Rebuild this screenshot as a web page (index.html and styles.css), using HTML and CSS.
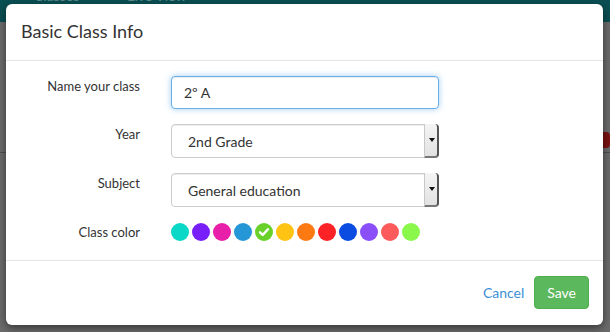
FILE: index.html
```html
<!DOCTYPE html>
<html lang="en">
<head>
    <meta charset="UTF-8">
    <meta name="viewport" content="width=device-width, initial-scale=1.0">
    <title>Basic Class Info</title>
    <link rel="stylesheet" href="styles.css">
</head>
<body>
    <div class="topbar">
        <span class="nav-item">Classes</span>
        <span class="nav-item">Live View</span>
    </div>
    <div class="page">
        <div class="page-rule"></div>
        <div class="page-badge"></div>
    </div>

    <div class="modal">
        <div class="modal-header">
            <h4 class="modal-title">Basic Class Info</h4>
        </div>
        <div class="modal-body">
            <div class="form-row">
                <label class="control-label" for="class-name">Name your class</label>
                <input id="class-name" class="form-control focused" type="text" value="2º A">
            </div>
            <div class="form-row">
                <label class="control-label" for="class-year">Year</label>
                <div class="select-wrap">
                    <select id="class-year" class="form-control">
                        <option>2nd Grade</option>
                    </select>
                    <span class="select-btn"><span class="caret"></span></span>
                </div>
            </div>
            <div class="form-row">
                <label class="control-label" for="class-subject">Subject</label>
                <div class="select-wrap">
                    <select id="class-subject" class="form-control">
                        <option>General education</option>
                    </select>
                    <span class="select-btn"><span class="caret"></span></span>
                </div>
            </div>
            <div class="form-row">
                <label class="control-label">Class color</label>
                <div class="colors">
                    <span class="swatch c1"></span>
                    <span class="swatch c2"></span>
                    <span class="swatch c3"></span>
                    <span class="swatch c4"></span>
                    <span class="swatch c5 selected">
                        <svg width="18" height="18" viewBox="0 0 18 18"><path d="M5 9.3l2.7 2.6 5.3-5.6" fill="none" stroke="#fff" stroke-width="2.4" stroke-linecap="round" stroke-linejoin="round"/></svg>
                    </span>
                    <span class="swatch c6"></span>
                    <span class="swatch c7"></span>
                    <span class="swatch c8"></span>
                    <span class="swatch c9"></span>
                    <span class="swatch c10"></span>
                    <span class="swatch c11"></span>
                    <span class="swatch c12"></span>
                </div>
            </div>
        </div>
        <div class="modal-footer">
            <a class="btn-link" href="#">Cancel</a>
            <button class="btn-save">Save</button>
        </div>
    </div>
</body>
</html>
```

FILE: styles.css
```css
* {
    box-sizing: border-box;
}
body {
    margin: 0;
    width: 610px;
    height: 332px;
    overflow: hidden;
    background-color: #6b6b6b;
    font-family: Lato, "Open Sans", sans-serif;
    color: #333;
    position: relative;
}
.topbar {
    height: 22px;
    background-color: #0a4f53;
    display: flex;
    gap: 48px;
    padding-left: 34px;
}
.nav-item {
    font-size: 14px;
    color: #5c8a8c;
    margin-top: -12px;
    line-height: 16px;
}
.page {
    position: relative;
    height: 310px;
}
.page-rule {
    position: absolute;
    left: 0;
    right: 0;
    top: 130px;
    border-top: 1px solid #4f4f4f;
}
.page-badge {
    position: absolute;
    right: 0;
    top: 110px;
    width: 14px;
    height: 16px;
    border-radius: 4px;
    background-color: #7a1212;
}

/* modal */
.modal {
    position: absolute;
    left: 6px;
    top: 4px;
    width: 597px;
    height: 321px;
    background: #fff;
    border-radius: 6px;
    box-shadow: 0 3px 9px rgba(0, 0, 0, 0.5);
    display: flex;
    flex-direction: column;
}
.modal-header {
    height: 57px;
    padding: 0 15px;
    border-bottom: 1px solid #e5e5e5;
    display: flex;
    align-items: center;
}
.modal-title {
    margin: 0;
    font-size: 18px;
    font-weight: 400;
    color: #333;
    padding-bottom: 2px;
}
.modal-body {
    height: 200px;
    padding-top: 15px;
    display: flex;
    flex-direction: column;
    gap: 15px;
    border-bottom: 1px solid #e5e5e5;
}
.form-row {
    display: grid;
    grid-template-columns: 134px 268px;
    column-gap: 31px;
    align-items: start;
}
.control-label {
    text-align: right;
    font-size: 13px;
    line-height: 20px;
    color: #333;
}
.form-control {
    width: 268px;
    height: 34px;
    border: 1px solid #ccc;
    border-radius: 4px;
    font-family: Lato, "Open Sans", sans-serif;
    font-size: 14px;
    color: #333;
    background: #fff;
    padding: 0 12px;
    margin: 0;
}
input.form-control {
    height: 33px;
}
.focused {
    border-color: #66afe9;
    outline: none;
    box-shadow: inset 0 1px 1px rgba(0, 0, 0, 0.075), 0 0 6px rgba(102, 175, 233, 0.6);
}
.select-wrap {
    position: relative;
    width: 268px;
    height: 34px;
}
select.form-control {
    appearance: none;
    -webkit-appearance: none;
    padding-left: 16px;
    box-shadow: inset 0 1px 1px rgba(0, 0, 0, 0.075);
}
.select-btn {
    position: absolute;
    right: 0;
    top: 0;
    width: 15px;
    height: 34px;
    background: linear-gradient(#f4f4f4, #e2e2e2);
    border-left: 1px solid #c8c8c8;
    border-right: 2px solid #555;
    border-bottom: 2px solid #777;
    border-radius: 0 4px 4px 0;
    display: flex;
    align-items: center;
    justify-content: center;
}
.caret {
    width: 0;
    height: 0;
    border-left: 3px solid transparent;
    border-right: 3px solid transparent;
    border-top: 4px solid #111;
    margin-right: -1px;
}

/* colours */
.colors {
    display: flex;
    gap: 3px;
    height: 20px;
    align-items: center;
}
.swatch {
    width: 18px;
    height: 18px;
    border-radius: 50%;
    display: block;
}
.swatch svg {
    display: block;
}
.c1 { background: #0bd8c6; }
.c2 { background: #781ef9; }
.c3 { background: #e81fa8; }
.c4 { background: #2697d6; }
.c5 { background: #6ad12a; }
.c6 { background: #ffc314; }
.c7 { background: #fd7a12; }
.c8 { background: #fd2226; }
.c9 { background: #0a4ce2; }
.c10 { background: #8a4ff9; }
.c11 { background: #fd5b5b; }
.c12 { background: #89f84b; }

/* footer */
.modal-footer {
    flex: 1;
    display: flex;
    justify-content: flex-end;
    align-items: center;
    gap: 10px;
    padding-right: 14px;
    padding-bottom: 1px;
}
.btn-link {
    font-size: 14px;
    color: #3b8fd4;
    text-decoration: none;
}
.btn-save {
    height: 33px;
    padding: 0 12px;
    font-family: Lato, "Open Sans", sans-serif;
    font-size: 14px;
    color: #fff;
    background-color: #5cb85c;
    border: 1px solid #4cae4c;
    border-radius: 4px;
}
```
